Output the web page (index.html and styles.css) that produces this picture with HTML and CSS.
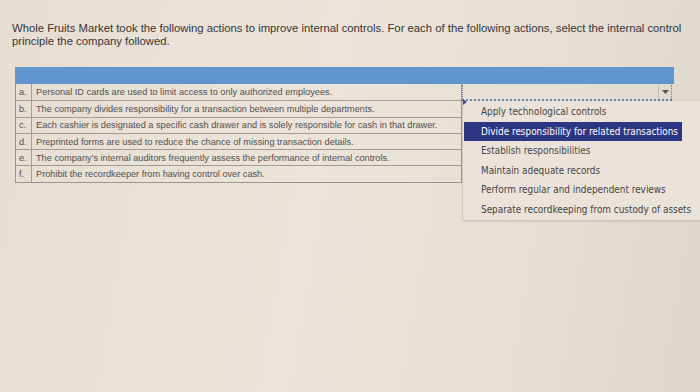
FILE: index.html
```html
<!DOCTYPE html>
<html>
<head>
<meta charset="utf-8">
<link rel="stylesheet" href="styles.css">
</head>
<body>
<div class="page">
  <p class="prompt">Whole Fruits Market took the following actions to improve internal controls. For each of the following actions, select the internal control principle the company followed.</p>
  <div class="grid">
    <div class="head"></div>
    <div class="body">
      <div class="rows">
        <div class="row"><span class="let">a.</span><span class="txt">Personal ID cards are used to limit access to only authorized employees.</span></div>
        <div class="row"><span class="let">b.</span><span class="txt">The company divides responsibility for a transaction between multiple departments.</span></div>
        <div class="row"><span class="let">c.</span><span class="txt">Each cashier is designated a specific cash drawer and is solely responsible for cash in that drawer.</span></div>
        <div class="row"><span class="let">d.</span><span class="txt">Preprinted forms are used to reduce the chance of missing transaction details.</span></div>
        <div class="row"><span class="let">e.</span><span class="txt">The company's internal auditors frequently assess the performance of internal controls.</span></div>
        <div class="row"><span class="let">f.</span><span class="txt">Prohibit the recordkeeper from having control over cash.</span></div>
      </div>
      <div class="selcol">
        <div class="select">
          <span class="sel-val"></span>
          <span class="sel-arrow"><svg width="7" height="4" viewBox="0 0 7 4"><path d="M0 0 L7 0 L3.5 4 Z" fill="#555"/></svg></span>
        </div>
        <div class="menu">
          <span class="pin"></span>
          <div class="opt">Apply technological controls</div>
          <div class="opt active">Divide responsibility for related transactions</div>
          <div class="opt">Establish responsibilities</div>
          <div class="opt">Maintain adequate records</div>
          <div class="opt">Perform regular and independent reviews</div>
          <div class="opt">Separate recordkeeping from custody of assets</div>
        </div>
      </div>
    </div>
  </div>
</div>
</body>
</html>
```

FILE: styles.css
```css
html, body {
  margin: 0;
  height: 100%;
}
body {
  background: linear-gradient(100deg, #e7ded3 0%, #ece4da 45%, #e6dfd4 75%, #dcd6cb 100%);
  overflow: hidden;
}
.page {
  padding: 22px 0 0 12px;
}
.prompt {
  margin: 0;
  width: 676px;
  font-family: "Liberation Sans", Arial, sans-serif;
  font-size: 11.3px;
  line-height: 12.5px;
  color: #363636;
}
.grid {
  margin: 20px 0 0 3px;
  width: 659px;
}
.head {
  height: 17px;
  background: #5e96cd;
}
.body {
  display: flex;
  position: relative;
}
.rows {
  width: 447px;
  border-left: 1px solid #9a958e;
  border-right: 1px solid #9a958e;
  border-bottom: 1px solid #9a958e;
  box-sizing: border-box;
}
.row {
  display: flex;
  height: 16.3px;
  border-top: 1px solid #a19c95;
  box-sizing: border-box;
  font-family: "Liberation Sans", Arial, sans-serif;
  font-size: 9.2px;
  color: #505050;
  align-items: center;
}
.row:first-child {
  border-top: none;
}
.let {
  width: 16px;
  padding-left: 3px;
  box-sizing: border-box;
  border-right: 1px solid #a19c95;
  height: 100%;
  display: flex;
  align-items: center;
}
.txt {
  padding-left: 4px;
  white-space: nowrap;
}
.selcol {
  width: 212px;
  position: relative;
}
.select {
  height: 16px;
  margin-top: 1px;
  border-left: 1px dotted #6d7ca0;
  border-right: 1px dotted #6d7ca0;
  border-bottom: 2px dotted #6d7ca0;
  box-sizing: border-box;
  display: flex;
  margin-right: 2px;
}
.sel-val {
  flex: 1;
  border-right: 1px solid #bdb8b0;
}
.sel-arrow {
  width: 12px;
  display: flex;
  align-items: center;
  justify-content: center;
}
.menu {
  position: absolute;
  left: 0;
  top: 17px;
  width: 238px;
  padding-top: 1px;
  background: #ebe3d9;
  border-left: 1px solid #cfc9bf;
  box-shadow: 1px 1px 2px rgba(120, 110, 100, 0.35);
  font-family: "DejaVu Sans Condensed", "DejaVu Sans", Verdana, sans-serif;
  font-size: 9.9px;
  color: #454545;
  box-sizing: border-box;
}
.pin {
  position: absolute;
  left: 0;
  top: -2px;
  width: 0;
  height: 0;
  border-top: 3px solid transparent;
  border-bottom: 3px solid transparent;
  border-left: 4px solid #3c4c8a;
}
.opt {
  height: 19.6px;
  line-height: 19.6px;
  padding-left: 18px;
  white-space: nowrap;
}
.opt.active {
  background: #2c3682;
  color: #ffffff;
  width: 218px;
  margin-left: 1px;
  padding-left: 17px;
  box-sizing: border-box;
}
```
